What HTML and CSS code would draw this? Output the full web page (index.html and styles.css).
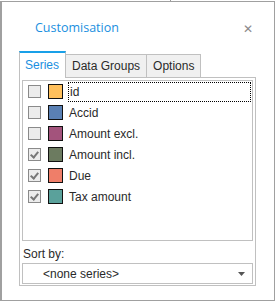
FILE: index.html
```html
<!DOCTYPE html>
<html lang="en">
<head>
    <meta charset="UTF-8">
    <title>Customisation</title>
    <link rel="stylesheet" href="styles.css">
</head>
<body>
    <div class="tick"></div>
    <div class="dialog">
        <div class="header">
            <span class="title">Customisation</span>
            <span class="close">&#x2715;</span>
        </div>

        <div class="tabs">
            <div class="tab active">Series</div>
            <div class="tab">Data Groups</div>
            <div class="tab">Options</div>
        </div>

        <div class="panel">
            <div class="list">
                <div class="row">
                    <span class="check"></span>
                    <span class="swatch" style="background:#ffc05c"></span>
                    <span class="label focus">id</span>
                </div>
                <div class="row">
                    <span class="check"></span>
                    <span class="swatch" style="background:#5a80b4"></span>
                    <span class="label">Accid</span>
                </div>
                <div class="row">
                    <span class="check"></span>
                    <span class="swatch" style="background:#a3537c"></span>
                    <span class="label">Amount excl.</span>
                </div>
                <div class="row">
                    <span class="check checked"></span>
                    <span class="swatch" style="background:#6c7b60"></span>
                    <span class="label">Amount incl.</span>
                </div>
                <div class="row">
                    <span class="check checked"></span>
                    <span class="swatch" style="background:#ef7e69"></span>
                    <span class="label">Due</span>
                </div>
                <div class="row">
                    <span class="check checked"></span>
                    <span class="swatch" style="background:#5aa19b"></span>
                    <span class="label">Tax amount</span>
                </div>
            </div>

            <div class="sort-label">Sort by:</div>
            <div class="select">
                <span>&lt;none series&gt;</span>
                <svg class="arrow" width="7" height="4" viewBox="0 0 7 4"><path d="M0 0h7L3.5 4z" fill="#555"/></svg>
            </div>
        </div>
    </div>
</body>
</html>
```

FILE: styles.css
```css
body {
    margin: 0;
    width: 275px;
    height: 303px;
    font-family: "Liberation Sans", Arial, sans-serif;
    font-size: 12px;
    color: #2a2a2a;
    background: #fff;
    position: relative;
}
.tick {
    position: absolute;
    left: 170px;
    top: 0;
    width: 1px;
    height: 1px;
    background: #999;
}
.dialog {
    margin-top: 1px;
    width: 272px;
    height: 298px;
    border: 1px solid #a0a0a0;
    border-left-width: 2px;
}
.header {
    display: flex;
    align-items: center;
    justify-content: space-between;
    height: 48px;
    padding: 0 21px 0 33px;
}
.title {
    font-family: "Open Sans", sans-serif;
    font-size: 12.5px;
    color: #1a8fe0;
    margin-top: 2px;
}
.close {
    font-size: 12px;
    color: #8a8a8a;
    margin-top: 5px;
}
.tabs {
    display: flex;
    align-items: flex-end;
    margin-left: 17px;
    height: 27px;
}
.tab {
    height: 22px;
    padding: 0 6px;
    line-height: 22px;
    background: #f0f0f0;
    border: 1px solid #c0c0c0;
    border-bottom: none;
    margin-left: -1px;
}
.tab.active {
    height: 25px;
    line-height: 25px;
    background: #fff;
    border-top: 2px solid #19a0e8;
    color: #1a8fe0;
    margin-left: 0;
    margin-bottom: -1px;
    position: relative;
    z-index: 1;
    padding: 0 6px 0 5px;
}
.panel {
    margin-left: 17px;
    width: 231px;
    height: 203px;
    border: 1px solid #c0c0c0;
    padding: 2px;
}
.list {
    height: 159px;
    border: 1px solid #c0c0c0;
}
.row {
    display: flex;
    align-items: center;
    height: 21px;
    padding-left: 5px;
}
.check {
    width: 11px;
    height: 11px;
    border: 1px solid #8a8a8a;
    background: #ececec;
    position: relative;
}
.check.checked::after {
    content: "";
    position: absolute;
    left: 3px;
    top: 1px;
    width: 3px;
    height: 6px;
    border: solid #777;
    border-width: 0 2px 2px 0;
    transform: rotate(40deg);
}
.swatch {
    width: 13px;
    height: 13px;
    border: 1px solid #111;
    margin-left: 7px;
}
.label {
    margin-left: 5px;
    padding: 0 1px;
    line-height: 18px;
}
.focus {
    flex: 1;
    border: 1px dotted #000;
    margin-right: 1px;
}
.sort-label {
    margin-top: 4px;
    height: 18px;
    line-height: 18px;
    padding-left: 1px;
}
.select {
    display: flex;
    align-items: center;
    justify-content: space-between;
    height: 19px;
    border: 1px solid #c0c0c0;
    padding: 0 7px 0 20px;
}
.arrow {
    margin-top: 1px;
}
```
